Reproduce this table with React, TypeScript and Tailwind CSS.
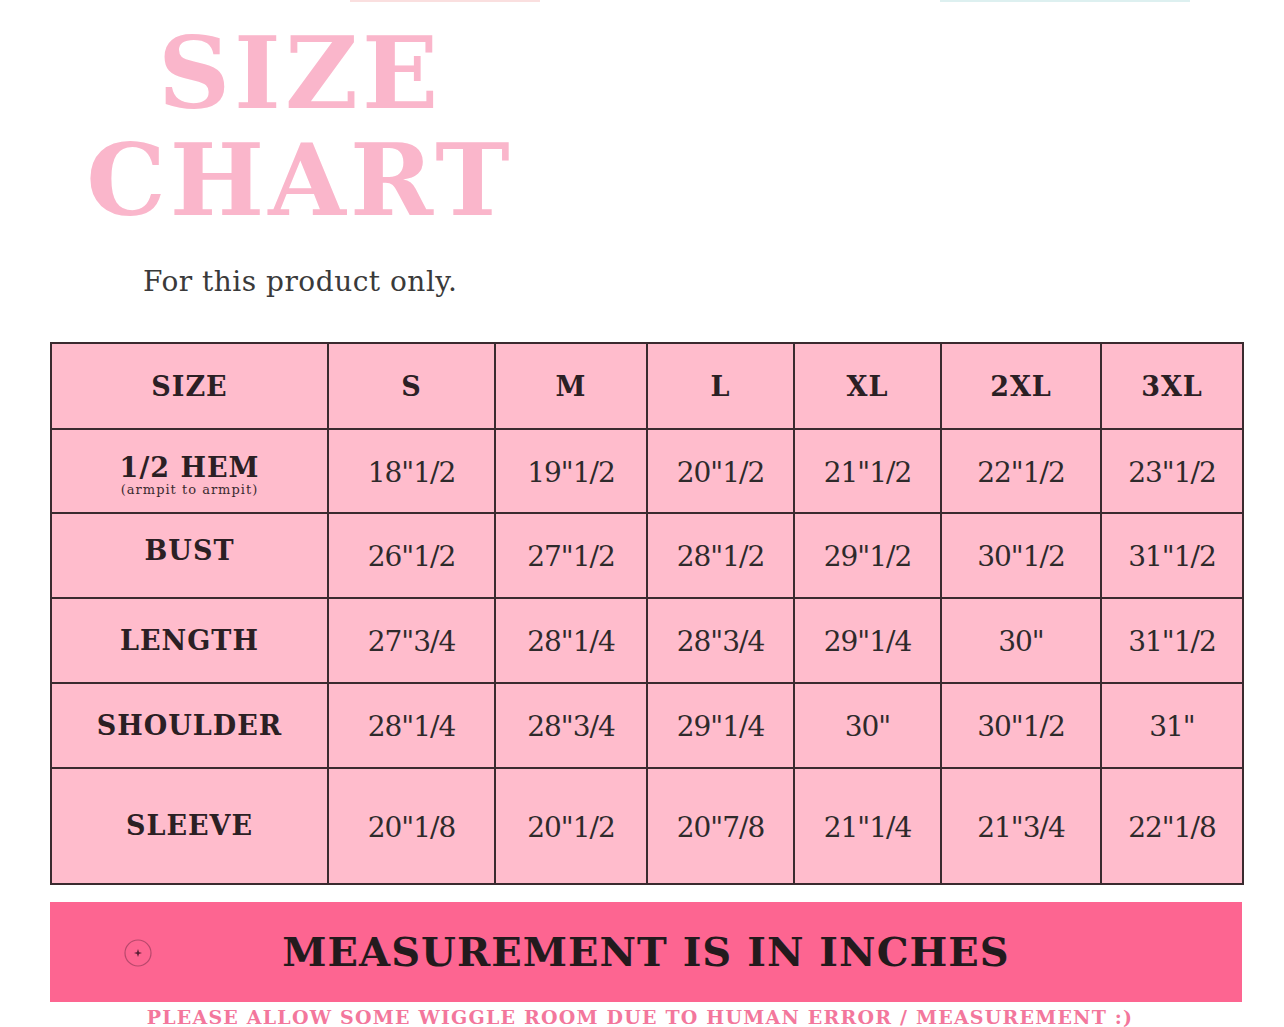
const headers = ["SIZE", "S", "M", "L", "XL", "2XL", "3XL"];

const rows = [
  { label: "1/2 HEM", note: "(armpit to armpit)", values: ['18"1/2', '19"1/2', '20"1/2', '21"1/2', '22"1/2', '23"1/2'], h: "h-[84px]" },
  { label: "BUST", values: ['26"1/2', '27"1/2', '28"1/2', '29"1/2', '30"1/2', '31"1/2'], h: "h-[85px]", up: true },
  { label: "LENGTH", values: ['27"3/4', '28"1/4', '28"3/4', '29"1/4', '30"', '31"1/2'], h: "h-[85px]" },
  { label: "SHOULDER", values: ['28"1/4', '28"3/4', '29"1/4', '30"', '30"1/2', '31"'], h: "h-[85px]" },
  { label: "SLEEVE", values: ['20"1/8', '20"1/2', '20"7/8', '21"1/4', '21"3/4', '22"1/8'], h: "h-[116px]" },
];

const colWidths = ["w-[277px]", "w-[167px]", "w-[152px]", "w-[147px]", "w-[147px]", "w-[160px]", "w-[142px]"];

export default function App() {
  return (
    <div className="relative w-[1284px] h-[1027px] overflow-hidden bg-white font-['DejaVu_Serif',serif]">
      {/* faint strip left over from the crop above */}
      <div className="absolute top-0 left-[350px] w-[190px] h-[2px] bg-[#f7c9c9] opacity-60" />
      <div className="absolute top-0 left-[940px] w-[250px] h-[2px] bg-[#cfe9ea] opacity-70" />

      <div className="pt-[20px] pl-[80px]">
        <div className="w-[440px] text-center font-bold text-[#fab6cb] text-[100px] leading-[107px] tracking-[4px]">
          <div>SIZE</div>
          <div>CHART</div>
        </div>
      </div>

      <p className="mt-[32px] ml-[143px] text-[28px] leading-[32px] tracking-[0.5px] text-[#3a3a3a]">For this product only.</p>

      <table className="mt-[44px] ml-[50px] table-fixed border-collapse border-2 border-[#3a2a2f] bg-[#ffbccc] text-[#2b2024]">
        <colgroup>
          {colWidths.map((w, i) => (
            <col key={i} className={w} />
          ))}
        </colgroup>
        <tbody>
          <tr className="h-[86px]">
            {headers.map((h) => (
              <td key={h} className="border-2 border-[#3a2a2f] text-center font-bold text-[27px] tracking-[1px] align-middle pt-[3px]">
                {h}
              </td>
            ))}
          </tr>
          {rows.map((r) => (
            <tr key={r.label} className={r.h}>
              <td className="border-2 border-[#3a2a2f] text-center align-middle">
                <div className={`font-bold text-[27px] tracking-[1px] leading-[30px] ${r.up ? "-mt-[10px]" : ""} ${r.note ? "mt-[8px]" : ""}`}>
                  {r.label}
                </div>
                {r.note && <div className="text-[13px] leading-[14px] tracking-[1px] text-[#3a2a2f]">{r.note}</div>}
              </td>
              {r.values.map((v, i) => (
                <td key={i} className="border-2 border-[#3a2a2f] text-center align-middle text-[28px] text-[#2e2a2b] tracking-[-1px] pt-[3px]">
                  {v}
                </td>
              ))}
            </tr>
          ))}
        </tbody>
      </table>

      <div className="relative mt-[17px] ml-[50px] w-[1192px] h-[100px] bg-[#fd6591] flex items-center justify-center">
        <svg className="absolute left-[73px] top-[36px]" width="30" height="30" viewBox="0 0 30 30">
          <circle cx="15" cy="15" r="13" fill="none" stroke="#8a3553" strokeWidth="1.2" opacity="0.6" />
          <path d="M15 11 L16.3 15 L15 19 L13.7 15 Z M11 15 L15 13.8 L19 15 L15 16.2 Z" fill="#5a1f35" />
        </svg>
        <span className="font-bold text-[40px] leading-none tracking-[1px] text-[#231a1d]">MEASUREMENT IS IN INCHES</span>
      </div>

      <p className="mt-[5px] ml-[140px] w-[1000px] text-center font-bold text-[19px] leading-[20px] text-[#f3779c] tracking-[1.2px]">
        PLEASE ALLOW SOME WIGGLE ROOM DUE TO HUMAN ERROR / MEASUREMENT :)
      </p>
    </div>
  );
}
